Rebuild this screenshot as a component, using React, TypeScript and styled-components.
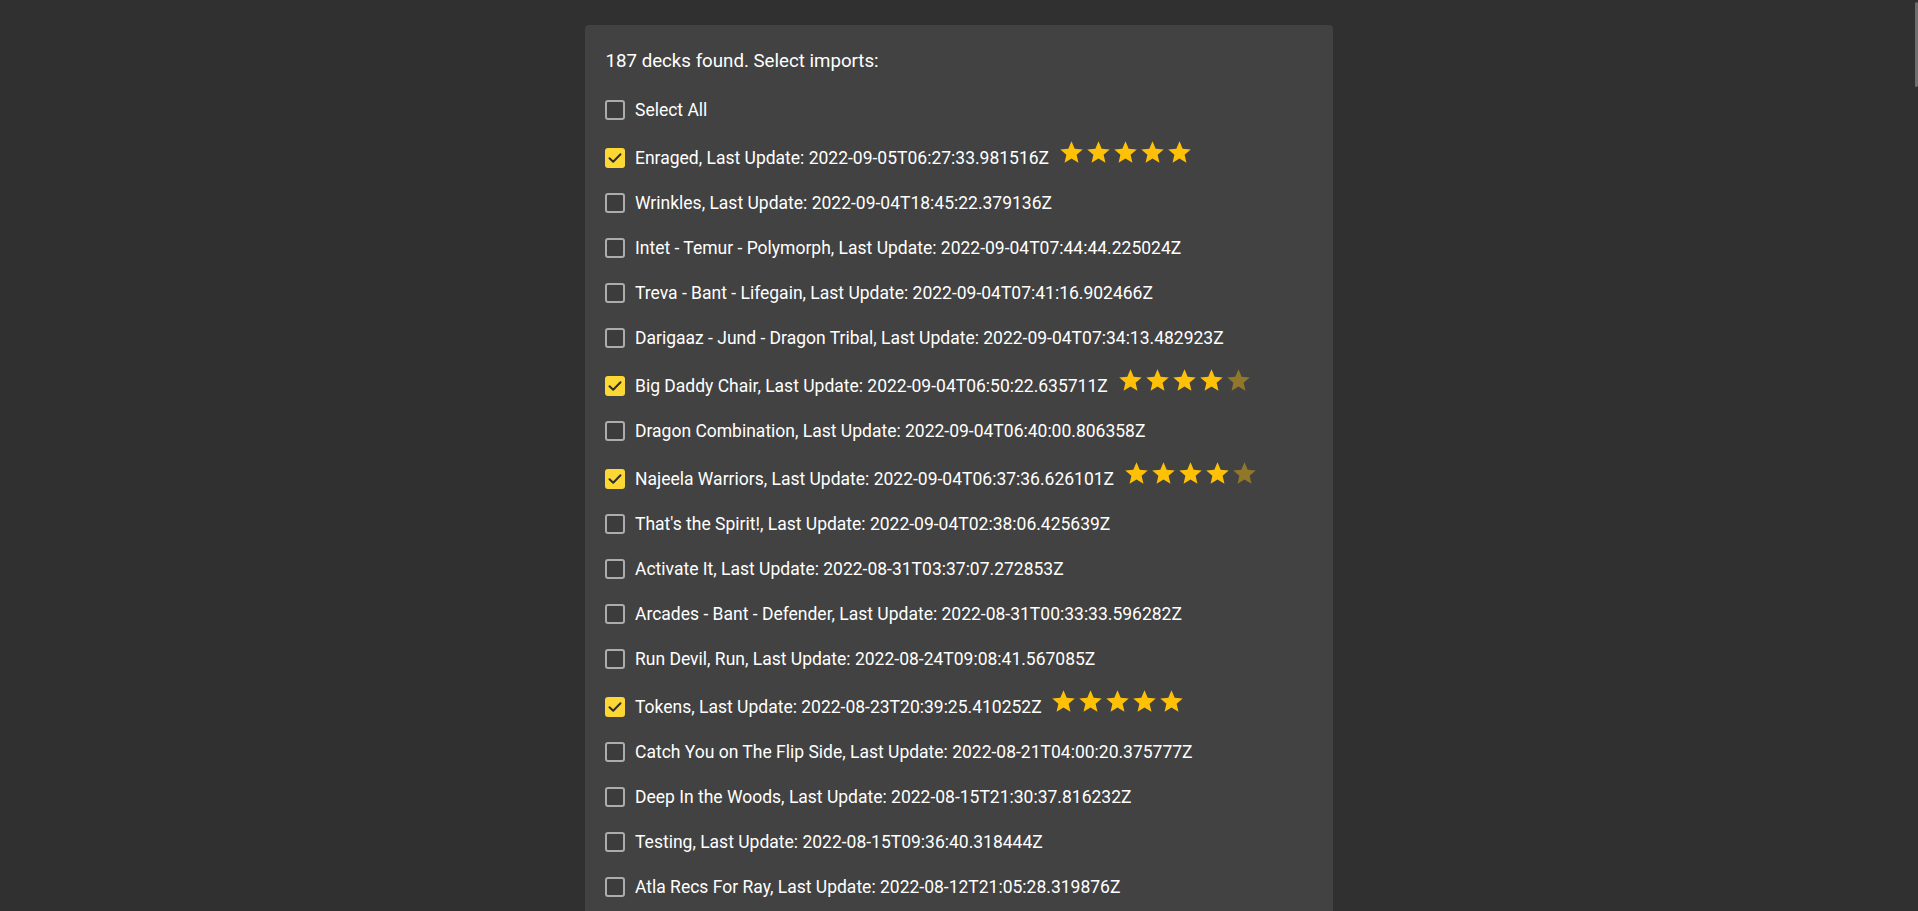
import React from "react";
import styled, { createGlobalStyle } from "styled-components";

const GlobalStyle = createGlobalStyle`
  html, body {
    margin: 0;
    padding: 0;
    background: #303030;
    overflow: hidden;
  }
  body {
    font-family: Roboto, "Noto Sans", "Liberation Sans", sans-serif;
    color: #ffffff;
  }
`;

const Page = styled.div`
  min-height: 911px;
  padding-top: 25px;
  box-sizing: border-box;
`;

const Panel = styled.section`
  width: 748px;
  margin: 0 auto;
  background: #424242;
  border-radius: 4px;
  padding: 25px 20px 24px;
  box-sizing: border-box;
`;

const Title = styled.div`
  font-size: 18.7px;
  line-height: 22px;
  margin-bottom: 15.5px;
  padding-left: 0.5px;
  color: #ffffff;
`;

const List = styled.div`
  display: flex;
  flex-direction: column;
`;

const Row = styled.label<{ $rated: boolean }>`
  display: flex;
  align-items: center;
  box-sizing: border-box;
  height: ${(p) => (p.$rated ? "48px" : "45px")};
  padding-top: ${(p) => (p.$rated ? "3px" : "0")};
  font-size: 17.5px;
  line-height: normal;
  color: #ffffff;
  white-space: nowrap;
`;

const Box = styled.span<{ $checked: boolean }>`
  flex: none;
  width: 20px;
  height: 20px;
  box-sizing: border-box;
  margin-right: 10px;
  border-radius: 3px;
  display: flex;
  align-items: center;
  justify-content: center;
  background: ${(p) => (p.$checked ? "#fdd835" : "#3c3c3c")};
  border: ${(p) => (p.$checked ? "none" : "2px solid #acacac")};
`;

const Label = styled.span``;

const Stars = styled.span`
  display: inline-flex;
  margin-left: 8.8px;
  margin-top: -12px;
  height: 27px;
`;

const Star = styled.svg<{ $on: boolean }>`
  width: 27px;
  height: 27px;
  fill: #ffc107;
  opacity: ${(p) => (p.$on ? 1 : 0.42)};
`;

const Thumb = styled.div`
  position: fixed;
  top: 2px;
  right: 0;
  width: 3px;
  height: 85px;
  background: #6e6e6e;
  border-radius: 2px;
`;

type Deck = { name: string; date: string; checked?: boolean; rating?: number };

const decks: Deck[] = [
  { name: "Enraged", date: "2022-09-05T06:27:33.981516Z", checked: true, rating: 5 },
  { name: "Wrinkles", date: "2022-09-04T18:45:22.379136Z" },
  { name: "Intet - Temur - Polymorph", date: "2022-09-04T07:44:44.225024Z" },
  { name: "Treva - Bant - Lifegain", date: "2022-09-04T07:41:16.902466Z" },
  { name: "Darigaaz - Jund - Dragon Tribal", date: "2022-09-04T07:34:13.482923Z" },
  { name: "Big Daddy Chair", date: "2022-09-04T06:50:22.635711Z", checked: true, rating: 4 },
  { name: "Dragon Combination", date: "2022-09-04T06:40:00.806358Z" },
  { name: "Najeela Warriors", date: "2022-09-04T06:37:36.626101Z", checked: true, rating: 4 },
  { name: "That's the Spirit!", date: "2022-09-04T02:38:06.425639Z" },
  { name: "Activate It", date: "2022-08-31T03:37:07.272853Z" },
  { name: "Arcades - Bant - Defender", date: "2022-08-31T00:33:33.596282Z" },
  { name: "Run Devil, Run", date: "2022-08-24T09:08:41.567085Z" },
  { name: "Tokens", date: "2022-08-23T20:39:25.410252Z", checked: true, rating: 5 },
  { name: "Catch You on The Flip Side", date: "2022-08-21T04:00:20.375777Z" },
  { name: "Deep In the Woods", date: "2022-08-15T21:30:37.816232Z" },
  { name: "Testing", date: "2022-08-15T09:36:40.318444Z" },
  { name: "Atla Recs For Ray", date: "2022-08-12T21:05:28.319876Z" },
];

function CheckBox({ checked }: { checked: boolean }) {
  return (
    <Box $checked={checked}>
      {checked && (
        <svg width="20" height="20" viewBox="0 0 20 20">
          <polyline
            points="4.5,10.2 8.2,13.8 15.5,6.2"
            fill="none"
            stroke="#2d2d2d"
            strokeWidth="2"
            strokeLinecap="round"
            strokeLinejoin="round"
          />
        </svg>
      )}
    </Box>
  );
}

function Rating({ value }: { value: number }) {
  return (
    <Stars>
      {[1, 2, 3, 4, 5].map((i) => (
        <Star key={i} $on={i <= value} viewBox="0 0 24 24">
          <path d="M12 17.27L18.18 21l-1.64-7.03L22 9.24l-7.19-.61L12 2 9.19 8.63 2 9.24l5.46 4.73L5.82 21z" />
        </Star>
      ))}
    </Stars>
  );
}

export default function App() {
  return (
    <Page>
      <GlobalStyle />
      <Panel>
        <Title>187 decks found. Select imports:</Title>
        <List>
          <Row $rated={false}>
            <CheckBox checked={false} />
            <Label>Select All</Label>
          </Row>
          {decks.map((d) => (
            <Row key={d.name} $rated={!!d.rating}>
              <CheckBox checked={!!d.checked} />
              <Label>
                {d.name}, Last Update: {d.date}
              </Label>
              {d.rating ? <Rating value={d.rating} /> : null}
            </Row>
          ))}
        </List>
      </Panel>
      <Thumb />
    </Page>
  );
}
